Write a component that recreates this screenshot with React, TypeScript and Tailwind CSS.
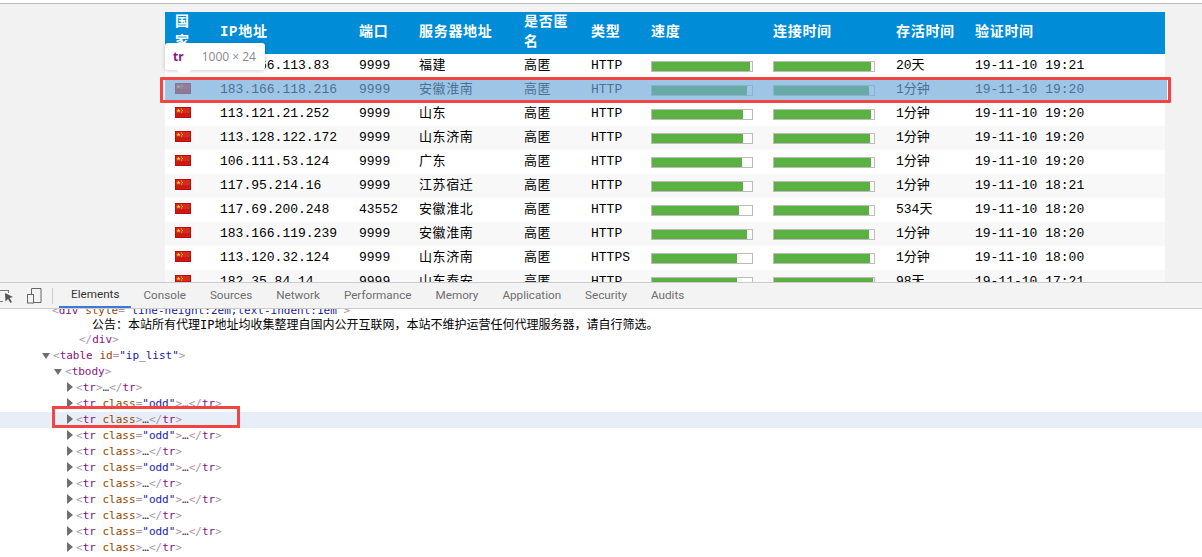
import React from 'react';

const cols = 'grid grid-cols-[45px_139px_60px_105px_67px_60px_122px_123px_79px_200px]';

const headers = ['国\n家', 'IP地址', '端口', '服务器地址', '是否匿\n名', '类型', '速度', '连接时间', '存活时间', '验证时间'];

const rows = [
  { ip: '183.166.113.83', port: '9999', addr: '福建', type: 'HTTP', speed: 98, conn: 97, alive: '20天', time: '19-11-10 19:21' },
  { ip: '183.166.118.216', port: '9999', addr: '安徽淮南', type: 'HTTP', speed: 95, conn: 95, alive: '1分钟', time: '19-11-10 19:20' },
  { ip: '113.121.21.252', port: '9999', addr: '山东', type: 'HTTP', speed: 91, conn: 97, alive: '1分钟', time: '19-11-10 19:20' },
  { ip: '113.128.122.172', port: '9999', addr: '山东济南', type: 'HTTP', speed: 91, conn: 96, alive: '1分钟', time: '19-11-10 19:20' },
  { ip: '106.111.53.124', port: '9999', addr: '广东', type: 'HTTP', speed: 90, conn: 97, alive: '1分钟', time: '19-11-10 19:20' },
  { ip: '117.95.214.16', port: '9999', addr: '江苏宿迁', type: 'HTTP', speed: 91, conn: 96, alive: '1分钟', time: '19-11-10 18:21' },
  { ip: '117.69.200.248', port: '43552', addr: '安徽淮北', type: 'HTTP', speed: 87, conn: 95, alive: '534天', time: '19-11-10 18:20' },
  { ip: '183.166.119.239', port: '9999', addr: '安徽淮南', type: 'HTTP', speed: 95, conn: 95, alive: '1分钟', time: '19-11-10 18:20' },
  { ip: '113.120.32.124', port: '9999', addr: '山东济南', type: 'HTTPS', speed: 85, conn: 96, alive: '1分钟', time: '19-11-10 18:00' },
  { ip: '182.35.84.14', port: '9999', addr: '山东泰安', type: 'HTTP', speed: 85, conn: 99, alive: '98天', time: '19-11-10 17:21' },
];

const tabs = ['Elements', 'Console', 'Sources', 'Network', 'Performance', 'Memory', 'Application', 'Security', 'Audits'];

const Flag = () => (
  <svg width="16" height="11" viewBox="0 0 16 11" className="block">
    <rect x="0.5" y="0.5" width="15" height="10" fill="#d92b1c" stroke="#b80d0d" />
    <rect x="1" y="6" width="14" height="4" fill="#c91a14" />
    <path d="M3.5 1.5l.6 1.4 1.4.1-1.1.9.4 1.4-1.3-.8-1.3.8.4-1.4-1.1-.9 1.4-.1z" fill="#f8d53a" />
    <rect x="6" y="1.5" width="1" height="1" fill="#f8d53a" />
    <rect x="7" y="3" width="1" height="1" fill="#f8d53a" />
    <rect x="6" y="4.5" width="1" height="1" fill="#f8d53a" />
  </svg>
);

const Bar = ({ value }: { value: number }) => (
  <div className="w-[102px] h-[11px] border border-[#bbbbbb] bg-white">
    <div className="h-full bg-[#5ab041]" style={{ width: `${value}%` }} />
  </div>
);

const Tag = ({ attr }: { attr?: string }) => (
  <span>
    <span className="text-[#a894a6]">&lt;</span>
    <span className="text-[#881280]">tr</span>
    {attr !== undefined && (
      <>
        {' '}
        <span className="text-[#994500]">class</span>
        {attr && (
          <>
            <span className="text-[#a894a6]">=</span>
            <span className="text-[#1a1aa6]">"{attr}"</span>
          </>
        )}
      </>
    )}
    <span className="text-[#a894a6]">&gt;</span>
    <span className="text-[#444]">…</span>
    <span className="text-[#a894a6]">&lt;/</span>
    <span className="text-[#881280]">tr</span>
    <span className="text-[#a894a6]">&gt;</span>
  </span>
);

const Closed = () => (
  <span className="w-0 h-0 border-y-[5px] border-y-transparent border-l-[6px] border-l-[#6e6e6e] mr-[3px] -mt-[2px]" />
);

const Open = () => (
  <span className="w-0 h-0 border-x-[4px] border-x-transparent border-t-[6px] border-t-[#6e6e6e] mr-[3px] -mt-[1px]" />
);

const trLines = [undefined, 'odd', '', 'odd', '', 'odd', '', 'odd', '', 'odd', ''];

export default function App() {
  return (
    <div className="relative w-[1202px] h-[557px] overflow-hidden bg-white font-['Liberation_Mono','Noto_Sans_CJK_SC',monospace] text-black">
      <div className="h-[3px] bg-white" />
      <div className="h-[279px] border-t border-[#bbbbbb] bg-[#f2f2f2] pt-[8px] pl-[165px] overflow-hidden">
        <div className="w-[1000px]">
          <div className={`${cols} h-[42px] pb-[2px] bg-[#008cd6] text-white text-[14px] font-bold leading-[20px] tracking-[0.7px]`}>
            {headers.map((h) => (
              <div key={h} className="pl-[10px] self-center whitespace-pre-line">
                {h}
              </div>
            ))}
          </div>
          {rows.map((r, i) => (
            <div key={r.ip} className={`${cols} h-[24px] items-center text-[13px] ${i % 2 === 1 ? 'bg-[#f8f8f8]' : 'bg-white'}`}>
              <div className="pl-[10px] -mt-[3px]">
                <Flag />
              </div>
              <div className="pl-[10px]">{r.ip}</div>
              <div className="pl-[10px]">{r.port}</div>
              <div className="pl-[10px] tracking-[0.6px]">{r.addr}</div>
              <div className="pl-[10px] tracking-[0.6px]">高匿</div>
              <div className="pl-[10px]">{r.type}</div>
              <div className="pl-[10px]">
                <Bar value={r.speed} />
              </div>
              <div className="pl-[10px]">
                <Bar value={r.conn} />
              </div>
              <div className="pl-[10px]">{r.alive}</div>
              <div className="pl-[10px]">{r.time}</div>
            </div>
          ))}
        </div>
      </div>

      <div className="flex h-[27px] items-center bg-[#f3f3f3] border-y border-[#cccccc] font-['Roboto',sans-serif] text-[11.7px] text-[#6e6e6e]">
        <div className="w-[27px] shrink-0">
          <svg width="14" height="16" viewBox="0 0 14 16" className="block">
            <path d="M0 2.5h9M0 13.5h3M8.5 2v3" stroke="#777" fill="none" />
            <path d="M5 5l8 4-3.5 1 2.5 4-1.5 1-2.5-4-2.5 2.5z" fill="#555" />
          </svg>
        </div>
        <div className="w-[25px] shrink-0">
          <svg width="15" height="16" viewBox="0 0 15 16" className="block">
            <path d="M4.5 6V.5h9.5v14H6.5" stroke="#666" fill="none" />
            <rect x="0.5" y="6.5" width="6" height="8.5" stroke="#666" fill="none" />
          </svg>
        </div>
        <div className="w-px h-[16px] bg-[#cccccc] mr-[6px] shrink-0" />
        {tabs.map((t, i) => (
          <div
            key={t}
            className={`h-full flex items-center px-[12px] pt-px ${i === 0 ? 'text-[#333333] border-b-2 border-[#3879d9]' : ''}`}
          >
            {t}
          </div>
        ))}
      </div>

      <div className="h-[248px] overflow-hidden font-['DejaVu_Sans_Mono','Noto_Sans_CJK_SC',monospace] text-[11px]">
        <div className="-mt-[6px]">
          <div className="h-[15px] leading-[15px] pl-[52px] whitespace-pre">
            <span className="text-[#a894a6]">&lt;</span>
            <span className="text-[#881280]">div</span> <span className="text-[#994500]">style</span>
            <span className="text-[#a894a6]">=</span>
            <span className="text-[#1a1aa6]">"line-height:2em;text-indent:1em"</span>
            <span className="text-[#a894a6]">&gt;</span>
          </div>
          <div className="h-[14px] leading-[14px] pl-[92px] text-[12px]">
            公告：本站所有代理IP地址均收集整理自国内公开互联网，本站不维护运营任何代理服务器，请自行筛选。
          </div>
          <div className="h-[16px] leading-[15px] pl-[79px]">
            <span className="text-[#a894a6]">&lt;/</span>
            <span className="text-[#881280]">div</span>
            <span className="text-[#a894a6]">&gt;</span>
          </div>
          <div className="flex items-center h-[16px] pl-[42px] whitespace-pre">
            <Open />
            <span>
              <span className="text-[#a894a6]">&lt;</span>
              <span className="text-[#881280]">table</span> <span className="text-[#994500]">id</span>
              <span className="text-[#a894a6]">=</span>
              <span className="text-[#1a1aa6]">"ip_list"</span>
              <span className="text-[#a894a6]">&gt;</span>
            </span>
          </div>
          <div className="flex items-center h-[16px] pl-[54px] whitespace-pre">
            <Open />
            <span>
              <span className="text-[#a894a6]">&lt;</span>
              <span className="text-[#881280]">tbody</span>
              <span className="text-[#a894a6]">&gt;</span>
            </span>
          </div>
          {trLines.map((attr, i) => (
            <div key={i} className={`flex items-center h-[16px] pl-[67px] whitespace-pre ${i === 2 ? 'bg-[#e8eef8]' : ''}`}>
              <Closed />
              <Tag attr={attr} />
            </div>
          ))}
        </div>
      </div>

      {/* inspected row highlight and its tooltip */}
      <div className="absolute left-[165px] top-[78px] w-[1002px] h-[24px] bg-[#6fa8dc]/66" />
      <div className="absolute left-[160px] top-[77px] w-[1011px] h-[26px] border-[3px] border-[#f44343] rounded-[1px]" />
      <div className="absolute left-[52px] top-[406px] w-[188px] h-[22px] border-[3px] border-[#f44343]" />
      <div className="absolute left-[165px] top-[43px] w-[100px] h-[27px] flex items-center pt-px rounded-[3px] bg-white shadow-[0_1px_4px_rgba(0,0,0,0.2)] font-['Open_Sans',sans-serif] text-[12px]">
        <span className="ml-[8px] font-bold text-[#881280]">tr</span>
        <span className="ml-[18px] text-[#888888]">1000 × 24</span>
      </div>
      <div className="absolute left-[177px] top-[70px] w-0 h-0 border-x-[7px] border-x-transparent border-t-[7px] border-t-white" />
    </div>
  );
}
